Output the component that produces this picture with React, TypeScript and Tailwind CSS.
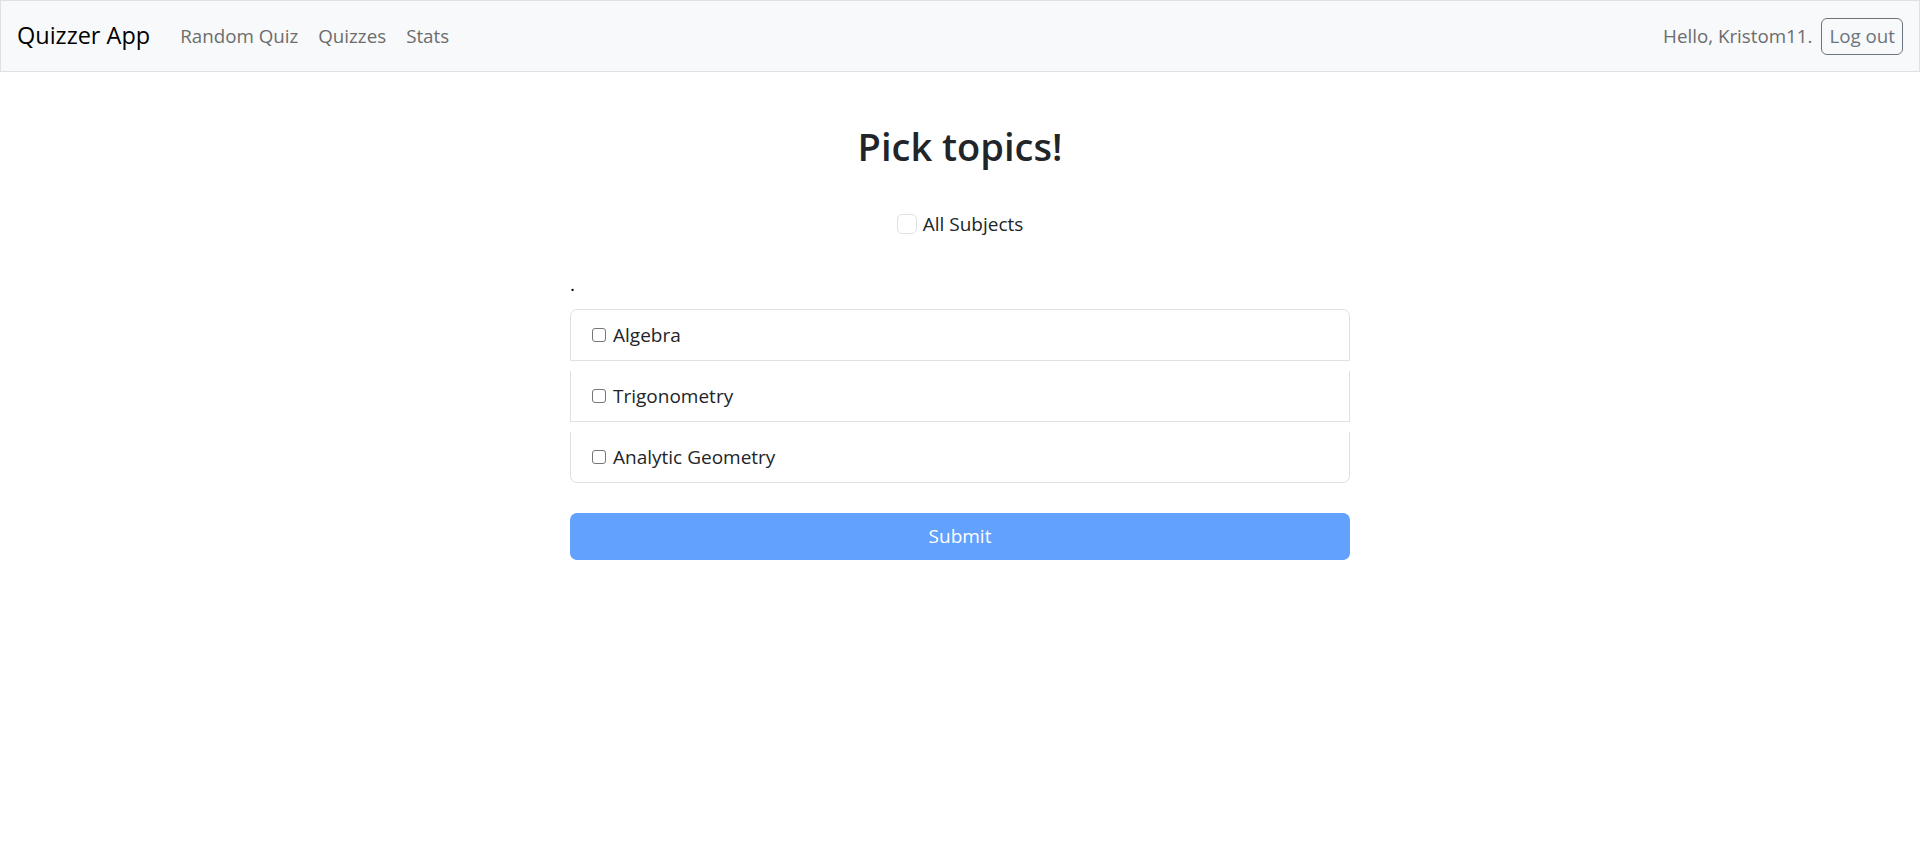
const topics = ['Algebra', 'Trigonometry', 'Analytic Geometry'];

function Box() {
  return <span className="ml-[1px] mr-[7px] inline-block h-[14px] w-[14px] shrink-0 rounded-[3px] border border-[#767676] bg-white" />;
}

export default function App() {
  return (
    <div className="min-h-screen bg-white font-['Open_Sans','Noto_Sans',sans-serif] text-[#212529]">
      <nav className="flex h-[72px] items-center border border-[#dee2e6] bg-[#f8f9fa] pl-4 pr-4">
        <span className="mr-5 text-[23.5px] text-black">Quizzer App</span>
        <div className="flex text-[18.75px] text-[#6b6c6d]">
          <span className="px-[10px]">Random Quiz</span>
          <span className="px-[10px]">Quizzes</span>
          <span className="px-[10px]">Stats</span>
        </div>
        <div className="ml-auto flex items-center text-[18.75px] text-[#6b6c6d]">
          <span>Hello, Kristom11.</span>
          <button className="ml-[9px] flex h-[37px] items-center rounded-[6px] border border-[#6c757d] px-[7px] text-[#6c757d]">
            Log out
          </button>
        </div>
      </nav>

      <main className="mx-auto w-[780px]">
        <h2 className="mt-[50px] text-center text-[38px] leading-[48px] font-semibold">Pick topics!</h2>

        <div className="mt-[39px] flex h-[30px] items-center justify-center text-[19px]">
          <span className="mr-[6px] inline-block h-[20px] w-[20px] rounded-[5px] border border-[#dee2e6] bg-white" />
          <span>All Subjects</span>
        </div>

        <p className="mt-[30px] text-[19px] leading-[30px] text-black">.</p>

        <ul className="mt-[10px] flex flex-col gap-[10px]">
          {topics.map((t, i) => (
            <li
              key={t}
              className={
                'flex h-[51px] items-center border-x border-b border-[#dee2e6] px-5 text-[19px] ' +
                (i === 0 ? 'h-[52px] rounded-t-[7px] border-t ' : '') +
                (i === topics.length - 1 ? 'rounded-b-[7px]' : '')
              }
            >
              <Box />
              <span>{t}</span>
            </li>
          ))}
        </ul>

        <button className="mt-[30px] h-[47px] w-full rounded-[7px] bg-[#62a1fe] text-[19px] text-white">Submit</button>
      </main>
    </div>
  );
}
